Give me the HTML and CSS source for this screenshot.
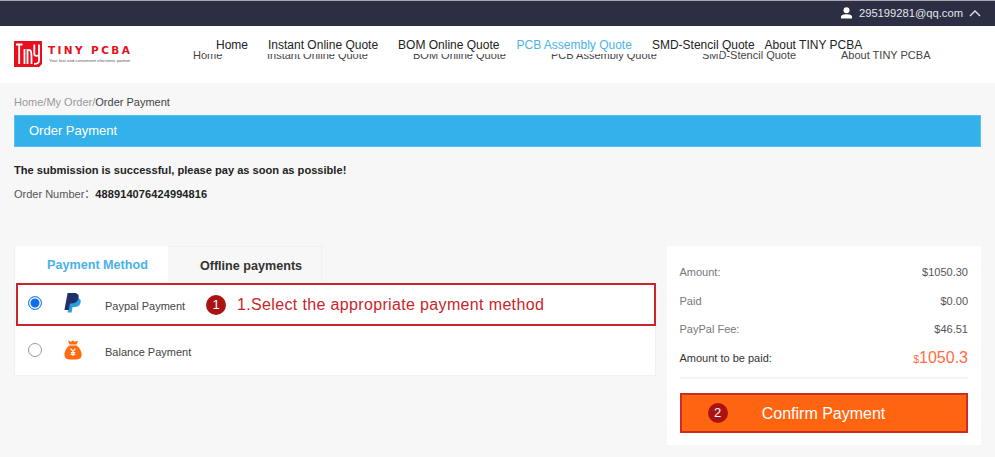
FILE: index.html
```html
<!DOCTYPE html>
<html lang="en">
<head>
<meta charset="utf-8">
<title>Order Payment</title>
<link rel="stylesheet" href="styles.css">
</head>
<body>
<div class="topbar">
  <svg class="user-icon" width="11" height="12" viewBox="0 0 11 12"><circle cx="5.5" cy="3.2" r="3" fill="#fff"/><path d="M0 11.5 V9.6 C0 8 3 7.2 5.5 7.2 S11 8 11 9.6 V11.5 Z" fill="#fff"/></svg>
  <span class="email">295199281@qq.com</span>
  <svg class="chev" width="12" height="7" viewBox="0 0 12 7"><path d="M1 6 L6 1 L11 6" fill="none" stroke="#e4e5ea" stroke-width="1.4"/></svg>
</div>
<header class="header">
  <div class="logo">
    <div class="logo-mark">
      <svg width="28" height="26" viewBox="0 0 28 26"><path d="M0 0H28V23L25 26H0Z" fill="#e60f1e"/><path d="M2 3.5H8.5M5.2 3.5V23M10.5 8V23M13.5 23V8M13.5 9.5C18 7.5 17.5 12 17.5 23M20.3 3.5V13C20.3 15.5 25 15.5 25 13V3.5M25 13V19.5C25 22 23 23 20 23" fill="none" stroke="#fff" stroke-width="1.8"/></svg>
    </div>
    <div class="logo-text">
      <div class="logo-title">TINY PCBA</div>
      <div class="logo-sub">Your fast and convenient electronic partner</div>
    </div>
  </div>
  <nav class="nav-under">
    <a class="under-home">Home</a>
    <a class="under-instant">Instant Online Quote</a>
    <a class="under-bom">BOM Online Quote</a>
    <a class="under-pcb">PCB Assembly Quote</a>
    <a class="under-smd">SMD-Stencil Quote</a>
    <a class="under-about">About TINY PCBA</a>
  </nav>
  <nav class="nav-over">
    <a>Home</a>
    <a>Instant Online Quote</a>
    <a class="bom">BOM Online Quote</a>
    <a class="active">PCB Assembly Quote</a>
    <a>SMD-Stencil Quote</a>
    <a class="last">About TINY PCBA</a>
  </nav>
</header>
<main class="main">
  <div class="crumbs"><span class="crumb-muted">Home/My Order/</span>Order Payment</div>
  <div class="title-bar">Order Payment</div>
  <p class="success">The submission is successful, please pay as soon as possible!</p>
  <p class="order-no"><span class="order-label">Order Number：</span><b>488914076424994816</b></p>
  <div class="columns">
    <section class="methods">
      <div class="tabs">
        <div class="tab tab-active">Payment Method</div>
        <div class="tab">Offline payments</div>
      </div>
      <div class="method-list">
        <div class="method method-marked">
          <span class="radio radio-on"></span>
          <svg class="method-icon" width="18" height="20" viewBox="0 0 18 20"><path d="M6 5H12C16 5 17.5 7 16.5 10C15.6 13 13 14 10.5 14H8.6L7.6 19.5H3.6Z" fill="#29a0dc"/><path d="M3.6 0H10C14 0 15.4 2.2 14.4 5.6C13.5 9 11 10.4 8 10.4H6L4.8 17H0.4Z" fill="#23306f"/></svg>
          <span class="method-name">Paypal Payment</span>
          <span class="step-badge">1</span>
          <span class="hint">1.Select the appropriate payment method</span>
        </div>
        <div class="method">
          <span class="radio"></span>
          <svg class="method-icon" width="18" height="20" viewBox="0 0 18 20"><path d="M4 0.5L7 1.8L9 0.5L11 1.8L14 0.5L12.6 4.6H5.4Z" fill="#ff6a13"/><path d="M5.4 5.4H12.6C15.4 7.6 17.6 11 17.6 14.6C17.6 18 15.6 19.4 13 19.4H5C2.4 19.4 0.4 18 0.4 14.6C0.4 11 2.6 7.6 5.4 5.4Z" fill="#ff6a13"/><path d="M6.6 8.6L9 11.4L11.4 8.6M9 11.4V16M6.8 12.6H11.2M6.8 14.4H11.2" fill="none" stroke="#fff" stroke-width="1.1"/></svg>
          <span class="method-name">Balance Payment</span>
        </div>
      </div>
    </section>
    <aside class="summary">
      <div class="row"><span>Amount:</span><span class="val">$1050.30</span></div>
      <div class="row"><span>Paid</span><span class="val">$0.00</span></div>
      <div class="row"><span>PayPal Fee:</span><span class="val">$46.51</span></div>
      <div class="row row-total"><span>Amount to be paid:</span><span class="total"><small>$</small>1050.3</span></div>
      <button class="confirm" type="button"><span class="step-badge confirm-badge">2</span>Confirm Payment</button>
    </aside>
  </div>
</main>
</body>
</html>
```
FILE: styles.css
```css
* { box-sizing: border-box; }
html, body { margin: 0; padding: 0; height: 457px; overflow: hidden; }
body { background: #f7f7f7; font-family: "Liberation Sans", Arial, sans-serif; color: #333; }
.topbar { height: 26px; background: #2c2e43; border-top: 1px solid #a9a9ad; display: flex; align-items: center; justify-content: flex-end; padding: 0 14px 1px 0; color: #e4e5ea; font-size: 11.2px; }
.user-icon { margin-right: 7px; }
.email { margin-right: 6px; }
.header { position: relative; height: 57px; background: #fff; }
.logo { position: absolute; left: 14px; top: 15px; display: flex; gap: 6px; }
.logo-mark { width: 28px; height: 26px; line-height: 0; }
.logo-text { padding-top: 3px; }
.logo-title { font-family: "DejaVu Sans", sans-serif; color: #e60f1e; font-size: 10.5px; font-weight: bold; letter-spacing: 2.4px; line-height: 12px; white-space: nowrap; }
.logo-sub { color: #555; font-size: 4.3px; line-height: 8px; margin-top: 1px; margin-left: 1px; white-space: nowrap; }
.nav-under a { position: absolute; top: 22px; font-size: 11px; line-height: 14px; color: #444; white-space: nowrap; }
.under-home { left: 193px; }
.under-instant { left: 267px; }
.under-bom { left: 413px; }
.under-pcb { left: 551px; }
.under-smd { left: 702px; }
.under-about { left: 841px; }
.nav-over { position: absolute; left: 205px; top: 0; width: 515px; height: 28px; background: #fff; padding: 12px 0 0 11px; display: flex; font-size: 12px; line-height: 15px; color: #222; white-space: nowrap; }
.nav-over a { margin-right: 20px; }
.nav-over a.bom { margin-right: 17px; }
.nav-over a.active { color: #49b2ea; }
.nav-over a.last { margin-left: -10px; margin-right: 0; }
.main { padding: 13px 14px 0; }
.crumbs { font-size: 11px; line-height: 13px; color: #444; }
.crumb-muted { color: #999; }
.title-bar { margin-top: 6px; height: 32px; background: #33b1ea; border: 1px solid #58bfee; color: #fff; font-size: 13px; line-height: 29px; padding-left: 14px; }
.success { margin: 17px 0 0; font-size: 11.1px; line-height: 13px; font-weight: bold; color: #222; }
.order-no { margin: 11px 0 0; font-size: 11px; line-height: 13px; color: #222; font-family: "Liberation Sans", "Noto Sans CJK SC", sans-serif; }
.order-no b { letter-spacing: 0.1px; }
.order-label { color: #555; }
.columns { display: flex; justify-content: space-between; align-items: flex-start; margin-top: 45px; }
.methods { width: 642px; }
.tabs { display: flex; }
.tab { width: 154px; height: 36px; background: #f7f7f7; border: 1px solid #f0f0f0; border-bottom: 0; border-left: 0; font-size: 12.6px; font-weight: bold; line-height: 38px; text-align: center; color: #333; padding-left: 13px; }
.tab-active { background: #fff; color: #49b2ea; border: 0; border-left: 1px solid #f0f0f0; padding-left: 12px; }
.method-list { background: #fff; border: 1px solid #f0f0f0; border-top: 0; height: 93px; }
.method { height: 46px; display: flex; align-items: center; padding-left: 13px; font-size: 11px; color: #444; }
.method-marked { border: 2px solid #c9252a; margin: 1px 0 2px 1px; height: 43px; width: 640px; padding-left: 10px; }
.radio { width: 14px; height: 14px; border-radius: 50%; border: 1px solid #9a9a9a; background: #fff; flex: none; margin-top: -3px; margin-right: 22px; }
.radio-on { border: 1.5px solid #2f88f5; box-shadow: inset 0 0 0 1.5px #fff; background: #0f6ef0; }
.method-icon { flex: none; margin-right: 23px; margin-top: -3px; }
.method-name { width: 101px; flex: none; padding-top: 2px; }
.step-badge { display: inline-block; width: 20px; height: 20px; border-radius: 50%; background: #ab1212; color: #fff; font-size: 13px; line-height: 20px; text-align: center; font-weight: normal; flex: none; }
.hint { color: #c9252a; font-size: 16px; margin-left: 11px; padding-top: 1px; letter-spacing: 0.35px; white-space: nowrap; }
.summary { width: 314px; height: 199px; background: #fff; padding: 12px 13px 0 12.5px; font-size: 11px; color: #777; }
.row { display: flex; justify-content: space-between; align-items: center; height: 28.5px; }
.val { color: #555; }
.row-total { color: #333; border-bottom: 2px solid #f4f4f4; height: 35.5px; padding-bottom: 5px; }
.total { color: #ff6b45; font-size: 16px; }
.total small { font-size: 10px; }
.confirm { position: relative; display: block; width: 288px; height: 40px; margin-top: 14px; background: #ff6510; border: 2px solid #cf2c21; color: #fff; font: 16px "Liberation Sans", Arial, sans-serif; padding: 2px 0 0; text-align: center; }
.confirm-badge { position: absolute; left: 26px; top: 8px; }
```
